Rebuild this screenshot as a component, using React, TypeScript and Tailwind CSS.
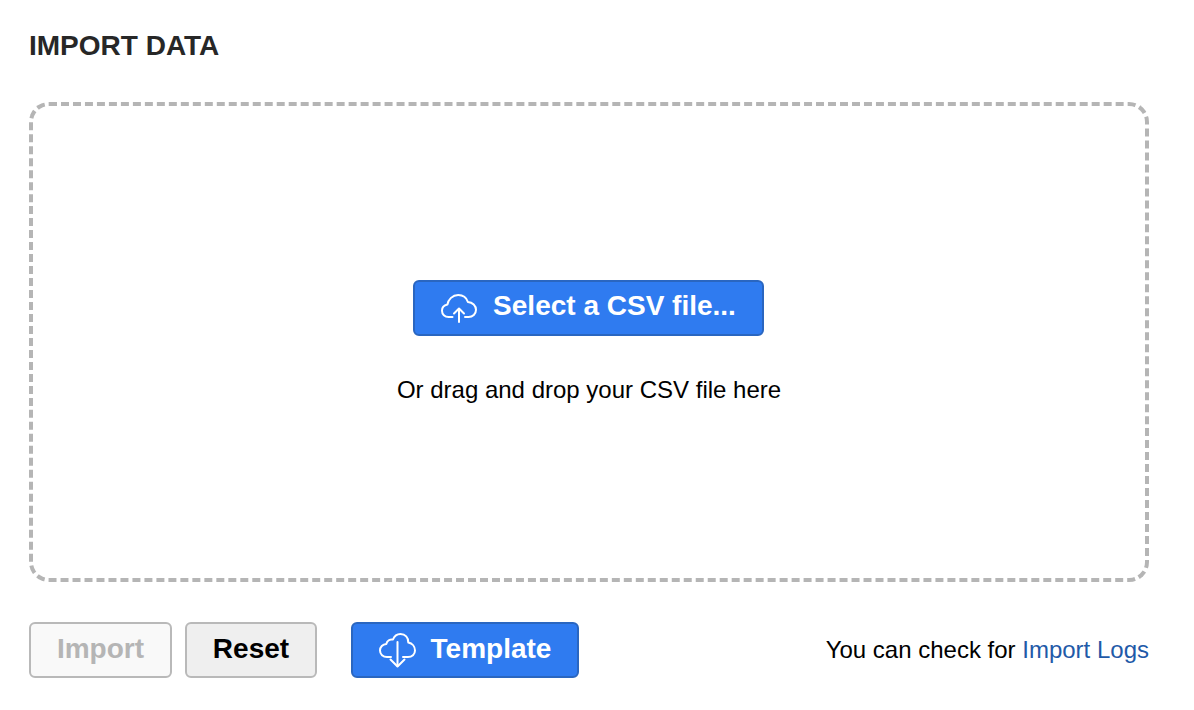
import React from 'react';

const CloudUp = () => (
  <svg width="36" height="30" viewBox="0 0 36 30" fill="none" stroke="white" strokeWidth="2" strokeLinecap="round" strokeLinejoin="round" className="shrink-0">
    <path d="M11.500 24H7.500C3.800 24 1 21.300 1 17.800c0-3.100 2.200-5.600 5.400-6.200C7.200 6.500 11.500 2 17.200 2c4.600 0 8.300 2.700 9.700 7 4.700.3 8.100 3.700 8.100 7.800 0 4.200-3.300 7.200-7.500 7.200H24" />
    <path d="M18 29V16" />
    <path d="M13 20.500l5-5 5 5" />
  </svg>
);

const CloudDown = () => (
  <svg width="37" height="36" viewBox="0 0 37 36" fill="none" stroke="white" strokeWidth="2" strokeLinecap="round" strokeLinejoin="round" className="shrink-0">
    <path d="M12 25H8C4 25 1 22.300 1 18.500c0-3.500 2.700-6.300 6.300-6.500C8 8.800 11 7 14 7.500 15.300 4 18 2 21.500 2c4.700 0 8 3.500 7.800 8.500 4 .8 6.700 4 6.700 8 0 3.800-3 6.500-7 6.500H24" />
    <path d="M18.500 10v24" />
    <path d="M11.500 27.500l7 7 7-7" />
  </svg>
);

export default function App() {
  return (
    <div className="w-[1194px] h-[710px] bg-white px-[29px] pt-[30px] font-['Liberation_Sans',Arial,sans-serif] text-black overflow-hidden">
      <h1 className="text-[28px] leading-[32px] font-bold text-[#272727]">IMPORT DATA</h1>

      <div className="mt-[40px] w-[1120px] h-[480px] border-[4px] border-dashed border-[#b5b5b5] rounded-[20px] flex flex-col items-center justify-center">
        <button className="mr-[1px] w-[351px] h-[56px] bg-[#2f7bf0] border-2 border-[#2a66c0] rounded-[6px] flex items-center justify-center gap-[16px] text-white text-[28px] font-bold">
          <CloudUp />
          <span className="pb-[3px]">Select a CSV file...</span>
        </button>
        <p className="mt-[39px] text-[24px] leading-[30px]">Or drag and drop your CSV file here</p>
      </div>

      <div className="mt-[40px] w-[1120px] flex items-center">
        <button className="w-[143px] h-[56px] bg-[#f9f9f9] border-2 border-[#b9b9b9] rounded-[6px] text-[#b5b5b5] text-[28px] font-bold pb-[3px]">Import</button>
        <button className="ml-[13px] w-[132px] h-[56px] bg-[#efefef] border-2 border-[#b9b9b9] rounded-[6px] text-black text-[28px] font-bold pb-[3px]">Reset</button>
        <button className="ml-[34px] w-[228px] h-[56px] bg-[#2f7bf0] border-2 border-[#2a66c0] rounded-[6px] flex items-center justify-center gap-[15px] text-white text-[28px] font-bold">
          <CloudDown />
          <span className="pb-[3px]">Template</span>
        </button>
        <p className="ml-auto text-[24px] leading-[30px]">
          You can check for <a className="text-[#1f5aa8]">Import Logs</a>
        </p>
      </div>
    </div>
  );
}
